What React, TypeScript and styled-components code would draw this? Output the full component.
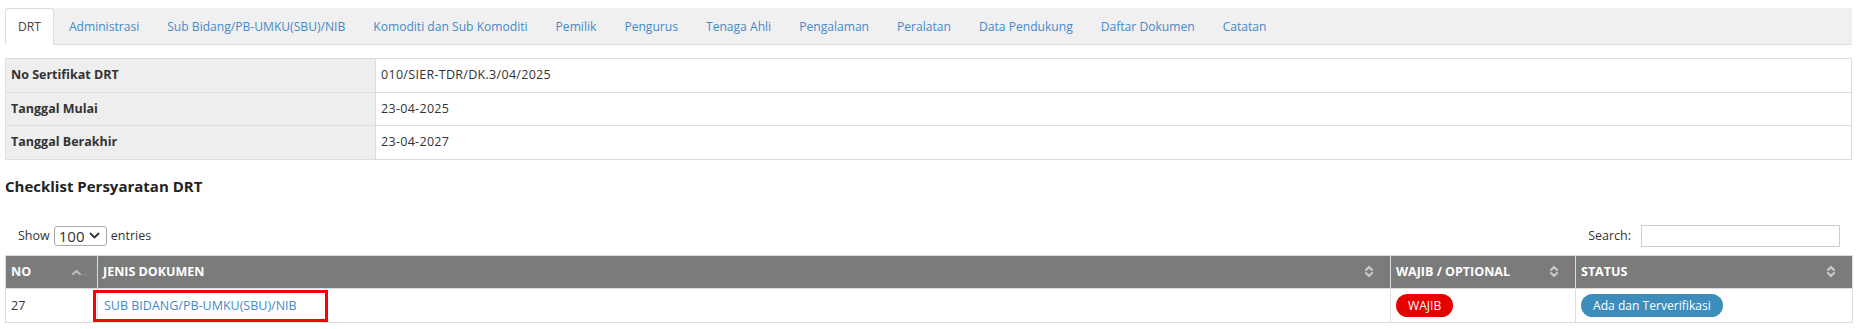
import React from 'react';
import styled, { createGlobalStyle } from 'styled-components';

const GlobalStyle = createGlobalStyle`
  html, body { margin: 0; padding: 0; background: #fff; }
  body {
    font-family: "Open Sans", "Liberation Sans", Arial, sans-serif;
    font-size: 12.5px;
    color: #333;
  }
  * { box-sizing: border-box; }
`;

const Page = styled.div`
  padding: 8px 7px 0 5px;
`;

const TabBar = styled.ul`
  display: flex;
  margin: 0;
  padding: 0;
  list-style: none;
  height: 37px;
  background: #f0f0f0;
  border-bottom: 1px solid #ddd;
`;

const TabItem = styled.li`
  margin: 0 2px -1px 0;
`;

const TabLink = styled.a<{ $active?: boolean }>`
  display: block;
  height: 37px;
  padding: 0 12px;
  line-height: 35px;
  font-size: 12.1px;
  border: 1px solid transparent;
  border-radius: 4px 4px 0 0;
  color: ${(p) => (p.$active ? '#444' : '#428bca')};
  text-decoration: none;
  white-space: nowrap;
  ${(p) => (p.$active ? 'background: #fff; border-color: #ddd #ddd transparent;' : '')}
`;

const InfoTable = styled.table`
  width: 100%;
  margin-top: 13px;
  border-collapse: collapse;
  border: 1px solid #ddd;
`;

const InfoLabel = styled.th`
  width: 370px;
  background: #eee;
  font-weight: 700;
  text-align: left;
  padding: 8px 5px;
  line-height: 16.5px;
  border: 1px solid #ddd;
`;

const InfoValue = styled.td`
  padding: 8px 5px;
  line-height: 16.5px;
  letter-spacing: 0.3px;
  border: 1px solid #ddd;
`;

const SectionTitle = styled.h4`
  margin: 18px 0 0;
  font-size: 15px;
  line-height: 17px;
  font-weight: 700;
  color: #222;
`;

const Controls = styled.div`
  display: flex;
  justify-content: space-between;
  align-items: center;
  height: 22px;
  margin-top: 30px;
  padding: 0 12px 0 13px;
`;

const ControlLabel = styled.label`
  display: flex;
  align-items: center;
  gap: 4px;
`;

const SelectBox = styled.span`
  display: inline-flex;
  align-items: center;
  height: 20px;
  width: 53px;
  border: 1px solid #aaa;
  border-radius: 3px;
  padding: 0 4px 0 4px;
  background: #fff;
`;

const SelectInput = styled.select`
  appearance: none;
  -webkit-appearance: none;
  border: none;
  background: transparent;
  font-family: "Open Sans", "Liberation Sans", Arial, sans-serif;
  font-size: 15px;
  line-height: 18px;
  color: #333;
  padding: 0;
  width: 30px;
  outline: none;
`;

const SearchInput = styled.input`
  width: 199px;
  height: 22px;
  margin-left: 6px;
  border: 1px solid #ccc;
  padding: 0 4px;
  font-family: inherit;
`;

const DataTable = styled.table`
  width: 100%;
  margin-top: 8px;
  border-collapse: collapse;
  table-layout: fixed;
  border: 1px solid #ddd;
`;

const HeadCell = styled.th`
  background: #7b7b7b;
  color: #fff;
  font-weight: 700;
  text-align: left;
  height: 33px;
  padding: 0 5px 0 5px;
  border: 1px solid #ddd;
`;

const HeadInner = styled.div<{ $iconGap?: number }>`
  display: flex;
  align-items: center;
  justify-content: space-between;
  padding-right: ${(p) => p.$iconGap ?? 11}px;
`;

const BodyCell = styled.td`
  height: 34px;
  padding: 0 5px;
  border: 1px solid #ddd;
  vertical-align: middle;
`;

const LinkCell = styled(BodyCell)`
  position: relative;
  padding-left: 6px;
`;

const DocLink = styled.a`
  color: #428bca;
  text-decoration: none;
`;

const Highlight = styled.span`
  position: absolute;
  left: -5px;
  top: 1px;
  width: 235px;
  height: 32px;
  border: 3px solid #f00;
  pointer-events: none;
`;

const Badge = styled.span<{ $tone: 'danger' | 'info' }>`
  display: inline-block;
  height: 23px;
  line-height: 23px;
  padding: 0 12px;
  border-radius: 12px;
  font-size: 12.1px;
  color: #fff;
  background: ${(p) => (p.$tone === 'danger' ? '#e60000' : '#3c8dbc')};
  white-space: nowrap;
`;

const SortBoth = () => (
  <svg width="10" height="15" viewBox="0 0 10 15" aria-hidden>
    <path d="M2 6 L5 3 L8 6" fill="none" stroke="#c9c9c9" strokeWidth="2.2" strokeLinecap="round" strokeLinejoin="round" />
    <path d="M2 9 L5 12 L8 9" fill="none" stroke="#c9c9c9" strokeWidth="2.2" strokeLinecap="round" strokeLinejoin="round" />
  </svg>
);

const SortAsc = () => (
  <svg width="16" height="8" viewBox="0 0 16 8" aria-hidden>
    <path d="M1 6 L4.5 3 L8 6" fill="none" stroke="#bdbdbd" strokeWidth="2" strokeLinecap="round" strokeLinejoin="round" />
    <path d="M10 7 L15 7" fill="none" stroke="#8f8f8f" strokeWidth="1" />
  </svg>
);

const Chevron = () => (
  <svg width="11" height="7" viewBox="0 0 11 7" aria-hidden>
    <path d="M1.5 1.5 L5.5 5.5 L9.5 1.5" fill="none" stroke="#333" strokeWidth="1.8" strokeLinecap="round" strokeLinejoin="round" />
  </svg>
);

const tabs = [
  'DRT',
  'Administrasi',
  'Sub Bidang/PB-UMKU(SBU)/NIB',
  'Komoditi dan Sub Komoditi',
  'Pemilik',
  'Pengurus',
  'Tenaga Ahli',
  'Pengalaman',
  'Peralatan',
  'Data Pendukung',
  'Daftar Dokumen',
  'Catatan',
];

const info = [
  ['No Sertifikat DRT', '010/SIER-TDR/DK.3/04/2025'],
  ['Tanggal Mulai', '23-04-2025'],
  ['Tanggal Berakhir', '23-04-2027'],
];

export default function App() {
  return (
    <>
      <GlobalStyle />
      <Page>
        <TabBar>
          {tabs.map((t, i) => (
            <TabItem key={t}>
              <TabLink href="#" $active={i === 0}>
                {t}
              </TabLink>
            </TabItem>
          ))}
        </TabBar>

        <InfoTable>
          <tbody>
            {info.map(([k, v]) => (
              <tr key={k}>
                <InfoLabel>{k}</InfoLabel>
                <InfoValue>{v}</InfoValue>
              </tr>
            ))}
          </tbody>
        </InfoTable>

        <SectionTitle>Checklist Persyaratan DRT</SectionTitle>

        <Controls>
          <ControlLabel>
            Show
            <SelectBox>
              <SelectInput defaultValue="100">
                <option value="10">10</option>
                <option value="25">25</option>
                <option value="50">50</option>
                <option value="100">100</option>
              </SelectInput>
              <Chevron />
            </SelectBox>
            entries
          </ControlLabel>
          <ControlLabel>
            Search:
            <SearchInput type="search" />
          </ControlLabel>
        </Controls>

        <DataTable>
          <colgroup>
            <col style={{ width: 92 }} />
            <col style={{ width: 1293 }} />
            <col style={{ width: 185 }} />
            <col style={{ width: 277 }} />
          </colgroup>
          <thead>
            <tr>
              <HeadCell>
                <HeadInner $iconGap={4}>
                  NO <SortAsc />
                </HeadInner>
              </HeadCell>
              <HeadCell>
                <HeadInner>
                  JENIS DOKUMEN <SortBoth />
                </HeadInner>
              </HeadCell>
              <HeadCell>
                <HeadInner>
                  WAJIB / OPTIONAL <SortBoth />
                </HeadInner>
              </HeadCell>
              <HeadCell>
                <HeadInner>
                  STATUS <SortBoth />
                </HeadInner>
              </HeadCell>
            </tr>
          </thead>
          <tbody>
            <tr>
              <BodyCell>27</BodyCell>
              <LinkCell>
                <DocLink href="#">SUB BIDANG/PB-UMKU(SBU)/NIB</DocLink>
                <Highlight />
              </LinkCell>
              <BodyCell>
                <Badge $tone="danger">WAJIB</Badge>
              </BodyCell>
              <BodyCell>
                <Badge $tone="info">Ada dan Terverifikasi</Badge>
              </BodyCell>
            </tr>
          </tbody>
        </DataTable>
      </Page>
    </>
  );
}
